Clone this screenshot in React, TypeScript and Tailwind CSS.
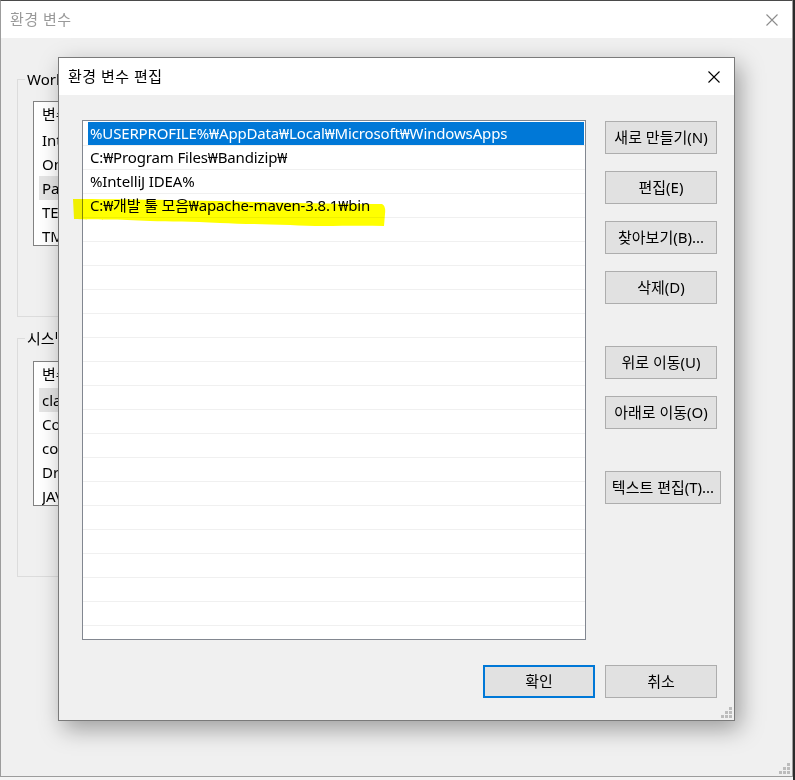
import React from 'react';

const pathItems = [
  '%USERPROFILE%₩AppData₩Local₩Microsoft₩WindowsApps',
  'C:₩Program Files₩Bandizip₩',
  '%IntelliJ IDEA%',
  'C:₩개발 툴 모음₩apache-maven-3.8.1₩bin',
];

const userVars = ['IntelliJ IDEA', 'OneDrive', 'Path', 'TEMP', 'TMP'];
const sysVars = ['classpath', 'ComSpec', 'configsetroot', 'DriverData', 'JAVA_HOME'];

function CloseIcon({ className }: { className: string }) {
  return (
    <svg width="12" height="12" viewBox="0 0 12 12" className={className}>
      <path d="M0.5 0.5 L11.5 11.5 M11.5 0.5 L0.5 11.5" stroke="currentColor" strokeWidth="1.1" fill="none" />
    </svg>
  );
}

function Grip() {
  return (
    <svg width="11" height="11" viewBox="0 0 11 11" className="text-[#bcbcbc]">
      <rect x="8" y="0" width="3" height="3" fill="currentColor" />
      <rect x="4" y="4" width="3" height="3" fill="currentColor" />
      <rect x="8" y="4" width="3" height="3" fill="currentColor" />
      <rect x="0" y="8" width="3" height="3" fill="currentColor" />
      <rect x="4" y="8" width="3" height="3" fill="currentColor" />
      <rect x="8" y="8" width="3" height="3" fill="currentColor" />
    </svg>
  );
}

function Button({ label, wide, primary }: { label: string; wide?: boolean; primary?: boolean }) {
  return (
    <button
      className={`h-[33px] ${wide ? 'w-[116px]' : 'w-[112px]'} bg-[#e1e1e1] text-[15px] text-black whitespace-nowrap ${
        primary ? 'border-2 border-[#0078d7]' : 'border border-[#adadad]'
      }`}
    >
      {label}
    </button>
  );
}

// only the part left of the edit dialog is visible, so clip there
function Clipped({ text, w }: { text: string; w: string }) {
  return <span className={`inline-block align-top overflow-hidden whitespace-nowrap ${w}`}>{text}</span>;
}

function VarList({ items, selected }: { items: string[]; selected: number }) {
  return (
    <div className="ml-[15px] w-[660px] h-[145px] border border-[#828282] bg-white overflow-hidden text-[15px] text-black">
      <div className="h-[26px] pl-[8px] leading-[24px]">
        <Clipped text="변수" w="w-[16px]" />
      </div>
      {items.map((v, i) => (
        <div key={v} className="h-[24px] pl-[5px]">
          <div className={`h-full pl-[3px] leading-[24px] ${i === selected ? 'bg-[#e5e5e5]' : ''}`}>
            <Clipped text={v} w="w-[16px]" />
          </div>
        </div>
      ))}
    </div>
  );
}

export default function App() {
  const rows = Array.from({ length: 22 }, (_, i) => pathItems[i] ?? '');

  return (
    <div className="relative flex w-[795px] h-[780px] bg-[#f4f4f4] overflow-hidden font-[family-name:'Noto_Sans','Noto_Sans_CJK_KR',sans-serif]">
      {/* background window */}
      <div className="relative w-[793px] h-[777px] flex flex-col bg-[#f0f0f0] border border-[#9c9c9c] border-t-[#4a4a4a]">
        <div className="h-[37px] shrink-0 bg-white flex items-center justify-between pl-[9px] pr-[14px]">
          <span className="text-[15px] text-[#999999] tracking-[0.5px]">환경 변수</span>
          <CloseIcon className="text-[#8c8c8c]" />
        </div>
        <div className="flex flex-col pl-[16px]">
          <fieldset className="mt-[31px] w-[690px] h-[248px] border border-[#dcdcdc] pt-[12px]">
            <legend className="ml-[7px] px-[2px] text-[15px] leading-[20px] text-black">
              <Clipped text="Workspace에 대한 사용자 변수(U)" w="w-[31px]" />
            </legend>
            <VarList items={userVars} selected={2} />
          </fieldset>
          <fieldset className="mt-[11px] w-[690px] h-[249px] border border-[#dcdcdc] pt-[13px]">
            <legend className="ml-[7px] px-[2px] text-[15px] leading-[20px] text-black">
              <Clipped text="시스템 변수(S)" w="w-[30px]" />
            </legend>
            <VarList items={sysVars} selected={0} />
          </fieldset>
        </div>
        <div className="absolute right-[2px] bottom-[2px]">
          <Grip />
        </div>
      </div>
      <div className="w-[2px] h-full bg-[#2b2b2b]" />

      {/* edit dialog */}
      <div className="absolute left-[58px] top-[57px] w-[677px] h-[664px] flex flex-col bg-[#f0f0f0] border border-[#7a7a7a] shadow-[5px_8px_22px_rgba(0,0,0,0.35)]">
        <div className="h-[37px] shrink-0 bg-white flex items-center justify-between pl-[9px] pr-[14px]">
          <span className="text-[15px] text-black tracking-[0.5px]">환경 변수 편집</span>
          <CloseIcon className="text-black" />
        </div>
        <div className="flex pl-[23px]">
          <div className="mt-[25px] w-[504px] h-[520px] border border-[#828790] bg-white overflow-hidden pt-[1px]">
            {rows.map((r, i) => (
              <div key={i} className="h-[24px] border-b border-[#f0f0f0] pl-[5px] pr-[1px]">
                <div
                  className={`h-full pl-[2px] text-[15px] leading-[23px] whitespace-nowrap tracking-[-0.15px] ${
                    i === 0 ? 'bg-[#0078d7] text-white' : 'text-black'
                  }`}
                >
                  {r}
                </div>
              </div>
            ))}
          </div>
          <div className="ml-[19px] mt-[26px] flex flex-col">
            <Button label="새로 만들기(N)" />
            <div className="mt-[17px]"><Button label="편집(E)" /></div>
            <div className="mt-[17px]"><Button label="찾아보기(B)..." /></div>
            <div className="mt-[17px]"><Button label="삭제(D)" /></div>
            <div className="mt-[42px]"><Button label="위로 이동(U)" /></div>
            <div className="mt-[17px]"><Button label="아래로 이동(O)" /></div>
            <div className="mt-[42px]"><Button label="텍스트 편집(T)..." wide /></div>
          </div>
        </div>
        <div className="mt-[25px] flex justify-end gap-[10px] pr-[17px]">
          <Button label="확인" primary />
          <Button label="취소" />
        </div>
        <div className="absolute right-[2px] bottom-[2px]">
          <Grip />
        </div>
      </div>

      {/* yellow marker stroke */}
      <svg
        className="absolute left-[70px] top-[194px] mix-blend-multiply pointer-events-none"
        width="320"
        height="36"
        viewBox="0 0 320 36"
      >
        <path
          d="M3,5 C60,5 150,7 230,9 C270,10 300,10 312,10 Q316,12 315,20 L314,32 C280,31 250,33 220,31 C190,30 170,30 150,29 C120,27 100,28 80,27 C50,25 20,26 4,25 Z"
          fill="#ffff00"
        />
      </svg>
    </div>
  );
}
